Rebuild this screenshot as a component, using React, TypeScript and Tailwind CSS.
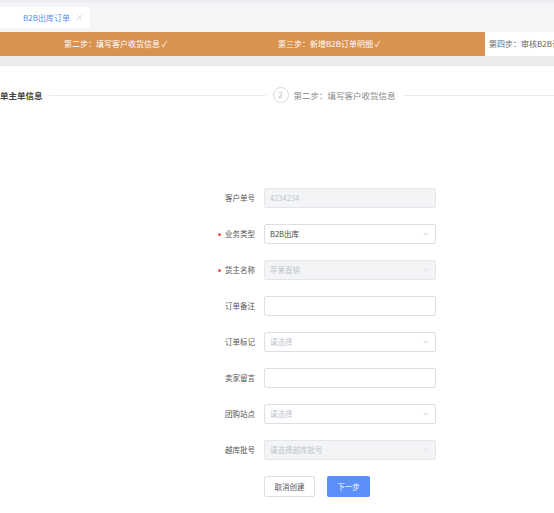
import { ChevronDown, X } from "lucide-react";

const font = {
  fontFamily: '"Noto Sans CJK SC", "Noto Sans", sans-serif',
};

type Field = {
  label: string;
  required?: boolean;
  kind: "input" | "select";
  value?: string;
  placeholder?: string;
  disabled?: boolean;
};

const fields: Field[] = [
  { label: "客户单号", kind: "input", placeholder: "4234234", disabled: true },
  { label: "业务类型", kind: "select", value: "B2B出库", required: true },
  { label: "货主名称", kind: "select", placeholder: "苹果直销", required: true, disabled: true },
  { label: "订单备注", kind: "input" },
  { label: "订单标记", kind: "select", placeholder: "请选择" },
  { label: "卖家留言", kind: "input" },
  { label: "团购站点", kind: "select", placeholder: "请选择" },
  { label: "越库批号", kind: "select", placeholder: "请选择越库批号", disabled: true },
];

function FormRow({ field }: { field: Field }) {
  return (
    <div className="flex items-center h-[20px] mb-[16px]">
      <div className="w-[256px] flex justify-end items-center pr-[1px] text-[7.5px] text-[#555]">
        {field.required && (
          <span className="mr-[4px] w-[3px] h-[3px] rounded-full bg-[#e2553f]" />
        )}
        {field.label}
      </div>
      <div
        className={`ml-[8px] w-[172px] h-[20px] rounded-[2px] border flex items-center px-[5px] text-[7.5px] ${
          field.disabled
            ? "bg-[#f3f4f6] border-[#e4e6ea]"
            : "bg-white border-[#dcdfe6]"
        }`}
      >
        <span
          className={`flex-1 ${
            field.value ? "text-[#444]" : "text-[#c0c4cc]"
          }`}
        >
          {field.value ?? field.placeholder ?? ""}
        </span>
        {field.kind === "select" && (
          <ChevronDown
            className={field.disabled ? "text-[#cfd2d8]" : "text-[#a0a4ab]"}
            size={8}
            strokeWidth={1.5}
          />
        )}
      </div>
    </div>
  );
}

export default function App() {
  return (
    <div className="w-[554px] h-[513px] bg-white overflow-hidden" style={font}>
      {/* tab bar */}
      <div className="h-[32px] bg-[#f4f5f7] border-t-[3px] border-[#eceef1] pt-[4px]">
        <div className="w-[90px] h-[21px] bg-white rounded-tr-[3px] rounded-br-[3px] flex items-center pl-[23px] text-[8px] text-[#5b8def]">
          B2B出库订单
          <X className="ml-[5px] text-[#a6a9ae]" size={9} strokeWidth={1.3} />
        </div>
      </div>

      {/* progress steps */}
      <div className="h-[24px] flex text-[8px]">
        <div className="w-[485px] shrink-0 bg-[#d9924f] flex items-center text-white">
          <div className="w-[214px] shrink-0 pl-[64px]">第二步：填写客户收货信息 ✓</div>
          <div className="w-[214px] shrink-0 pl-[64px]">第三步：新增B2B订单明细 ✓</div>
        </div>
        <div className="flex-1 min-w-0 bg-white flex items-center pl-[4px] text-[#666] whitespace-nowrap overflow-hidden">
          第四步：审核B2B订单明细
        </div>
      </div>
      <div className="h-[10px] bg-[#ebebeb]" />

      {/* step header */}
      <div className="mt-[21px] h-[16px] flex items-center">
        <span className="text-[8.5px] font-bold text-[#444] whitespace-nowrap">单主单信息</span>
        <div className="ml-[6px] w-[217px] h-px bg-[#ececec]" />
        <div className="ml-[7px] w-[16px] h-[16px] rounded-full border border-[#dcdcdc] flex items-center justify-center text-[8px] text-[#bbb]">
          2
        </div>
        <span className="ml-[5px] text-[8.5px] text-[#888] whitespace-nowrap">
          第二步：填写客户收货信息
        </span>
        <div className="ml-[7px] flex-1 h-px bg-[#ececec]" />
      </div>

      {/* form */}
      <div className="mt-[85px]">
        {fields.map((f) => (
          <FormRow key={f.label} field={f} />
        ))}
        <div className="flex pl-[264px] gap-[12px]">
          <button className="w-[51px] h-[21px] rounded-[2px] border border-[#dcdfe6] bg-white text-[7.5px] text-[#555]">
            取消创建
          </button>
          <button className="w-[43px] h-[21px] rounded-[2px] bg-[#5b8ff9] text-[7.5px] text-white">
            下一步
          </button>
        </div>
      </div>
    </div>
  );
}
